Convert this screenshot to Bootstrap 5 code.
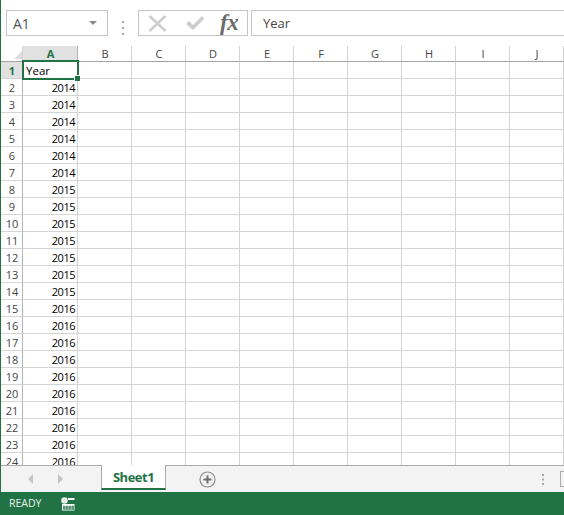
<!DOCTYPE html>
<html lang="en">
<head>
<meta charset="utf-8">
<title>Sheet1</title>
<link href="https://cdn.jsdelivr.net/npm/bootstrap@5.3.0/dist/css/bootstrap.min.css" rel="stylesheet">
<style>
html,body{height:100%;margin:0;background:#fff;overflow:hidden}
.xl-app{height:515px;width:564px;border-left:1px solid #217346;overflow:hidden}
.xl-toolbar{height:46px;flex:none;padding:10px 0 0 5px}
.xl-namebox{width:102px;height:26px;border:1px solid #c6c6c6;padding:0 6px;font:14px "Open Sans",sans-serif;color:#555}
.xl-caret{width:0;height:0;border-left:4px solid transparent;border-right:4px solid transparent;border-top:4px solid #8a8a8a;margin-right:4px}
.xl-dots{width:30px}
.xl-dots i{width:2px;height:2px;background:#a8a8a8;display:block}
.xl-fnbtns{width:110px;height:26px;border:1px solid #c6c6c6;padding:0 0 0 9px}
.xl-check{margin-left:18px}
.xl-fx{margin-left:15px;font:italic 700 23px/24px "Liberation Serif",serif;color:#6b6b6b;letter-spacing:-.5px}
.xl-formula{flex:1;height:26px;margin-left:3px;border:1px solid #c6c6c6;border-right:0;padding:0 11px;font:13px/24px "Open Sans",sans-serif;color:#444}
.xl-gridwrap{flex:1;min-height:0;overflow:hidden}
.xl-grid{border-collapse:separate;border-spacing:0;table-layout:fixed;width:563px}
.xl-grid td,.xl-grid th{height:17px;padding:2px 0 0;border-right:1px solid #d4d4d4;border-bottom:1px solid #d4d4d4;line-height:14px;overflow:visible;white-space:nowrap}
.xl-grid thead th{height:16px;padding:1px 0 0 1px;border-bottom:1px solid #a3a3a3;font:400 11px/14px "Open Sans",sans-serif;color:#444;text-align:center;background:#fff}
.xl-grid tbody th{padding-left:1px;font:400 11px/14px "Open Sans",sans-serif;color:#444;text-align:center;background:#fff;border-right:1px solid #b5b5b5}
.xl-grid td{font:11px/14px "Open Sans",sans-serif;letter-spacing:-.5px;color:#000;text-align:right;padding-right:2px}
.xl-grid .xl-hot{background:#e1e1e1;color:#217346;font-weight:700;border-right-color:#b5b5b5}
.xl-grid td.xl-txt{font-size:11.5px;letter-spacing:0;text-align:left;padding-left:3px;position:relative}
.xl-sel{position:absolute;left:-1px;top:-2px;width:57px;height:20px;border:2px solid #217346;pointer-events:none}
.xl-handle{position:absolute;right:-3px;bottom:-3px;background:#217346;border-left:1px solid #fff;border-top:1px solid #fff;box-sizing:content-box;width:5px;height:5px}
.xl-corner{width:0;height:0;border-left:8px solid transparent;border-bottom:8px solid #dcdcdc;position:absolute;left:13px;top:5px}
.xl-cornercell{position:relative}
.xl-tabs{height:27px;flex:none;background:#f3f3f3;border-top:1px solid #ababab;padding-left:26px}
.xl-arrows{width:74px;gap:21px}
.xl-tab{width:65px;height:25px;margin-top:-1px;background:#fff;border-left:1px solid #ababab;border-right:1px solid #ababab;border-bottom:2px solid #217346;font:700 13px/25px "Open Sans",sans-serif;color:#217346;text-align:center;letter-spacing:-.5px}
.xl-plus{margin-left:33px;margin-top:5px}
.xl-right{margin-left:auto;gap:15px}
.xl-scroll{width:4px;height:16px;border:1px solid #ababab;border-right:0;background:#f3f3f3}
.xl-status{height:23px;flex:none;background:#217346;color:#e8f1ec;font:10.5px/21px "Open Sans",sans-serif;padding-left:9px;margin-left:-1px}
.xl-ready{width:52px}
</style>
</head>
<body>
<div class="xl-app d-flex flex-column">
  <div class="xl-toolbar d-flex">
    <div class="xl-namebox d-flex align-items-center justify-content-between"><span>A1</span><span class="xl-caret"></span></div>
    <div class="xl-dots d-flex flex-column align-items-center justify-content-center gap-1"><i></i><i></i><i></i></div>
    <div class="xl-fnbtns d-flex align-items-center">
      <svg width="19" height="17" viewBox="0 0 19 17"><path d="M1.500 1l16 15M17.500 1l-16 15" stroke="#cdcdcd" stroke-width="2.600" fill="none"/></svg>
      <svg class="xl-check" width="20" height="16" viewBox="0 0 20 16"><path d="M1 9l3-3 4 4 9-9 2 3-11 11z" fill="#cdcdcd"/></svg>
      <span class="xl-fx">fx</span>
    </div>
    <div class="xl-formula">Year</div>
  </div>
  <div class="xl-gridwrap">
    <table class="xl-grid">
      <colgroup><col style="width:22px"><col style="width:55px"><col style="width:54px"><col style="width:54px"><col style="width:54px"><col style="width:54px"><col style="width:54px"><col style="width:54px"><col style="width:54px"><col style="width:54px"><col style="width:54px"></colgroup>
      <thead><tr><th class="xl-cornercell"><span class="xl-corner"></span></th><th class="xl-hot">A</th><th>B</th><th>C</th><th>D</th><th>E</th><th>F</th><th>G</th><th>H</th><th>I</th><th>J</th></tr></thead>
      <tbody>
<tr><th class="xl-hot">1</th><td class="xl-txt">Year<span class="xl-sel"><span class="xl-handle"></span></span></td><td></td><td></td><td></td><td></td><td></td><td></td><td></td><td></td><td></td></tr>
<tr><th>2</th><td>2014</td><td></td><td></td><td></td><td></td><td></td><td></td><td></td><td></td><td></td></tr>
<tr><th>3</th><td>2014</td><td></td><td></td><td></td><td></td><td></td><td></td><td></td><td></td><td></td></tr>
<tr><th>4</th><td>2014</td><td></td><td></td><td></td><td></td><td></td><td></td><td></td><td></td><td></td></tr>
<tr><th>5</th><td>2014</td><td></td><td></td><td></td><td></td><td></td><td></td><td></td><td></td><td></td></tr>
<tr><th>6</th><td>2014</td><td></td><td></td><td></td><td></td><td></td><td></td><td></td><td></td><td></td></tr>
<tr><th>7</th><td>2014</td><td></td><td></td><td></td><td></td><td></td><td></td><td></td><td></td><td></td></tr>
<tr><th>8</th><td>2015</td><td></td><td></td><td></td><td></td><td></td><td></td><td></td><td></td><td></td></tr>
<tr><th>9</th><td>2015</td><td></td><td></td><td></td><td></td><td></td><td></td><td></td><td></td><td></td></tr>
<tr><th>10</th><td>2015</td><td></td><td></td><td></td><td></td><td></td><td></td><td></td><td></td><td></td></tr>
<tr><th>11</th><td>2015</td><td></td><td></td><td></td><td></td><td></td><td></td><td></td><td></td><td></td></tr>
<tr><th>12</th><td>2015</td><td></td><td></td><td></td><td></td><td></td><td></td><td></td><td></td><td></td></tr>
<tr><th>13</th><td>2015</td><td></td><td></td><td></td><td></td><td></td><td></td><td></td><td></td><td></td></tr>
<tr><th>14</th><td>2015</td><td></td><td></td><td></td><td></td><td></td><td></td><td></td><td></td><td></td></tr>
<tr><th>15</th><td>2016</td><td></td><td></td><td></td><td></td><td></td><td></td><td></td><td></td><td></td></tr>
<tr><th>16</th><td>2016</td><td></td><td></td><td></td><td></td><td></td><td></td><td></td><td></td><td></td></tr>
<tr><th>17</th><td>2016</td><td></td><td></td><td></td><td></td><td></td><td></td><td></td><td></td><td></td></tr>
<tr><th>18</th><td>2016</td><td></td><td></td><td></td><td></td><td></td><td></td><td></td><td></td><td></td></tr>
<tr><th>19</th><td>2016</td><td></td><td></td><td></td><td></td><td></td><td></td><td></td><td></td><td></td></tr>
<tr><th>20</th><td>2016</td><td></td><td></td><td></td><td></td><td></td><td></td><td></td><td></td><td></td></tr>
<tr><th>21</th><td>2016</td><td></td><td></td><td></td><td></td><td></td><td></td><td></td><td></td><td></td></tr>
<tr><th>22</th><td>2016</td><td></td><td></td><td></td><td></td><td></td><td></td><td></td><td></td><td></td></tr>
<tr><th>23</th><td>2016</td><td></td><td></td><td></td><td></td><td></td><td></td><td></td><td></td><td></td></tr>
<tr><th>24</th><td>2016</td><td></td><td></td><td></td><td></td><td></td><td></td><td></td><td></td><td></td></tr>
      </tbody>
    </table>
  </div>
  <div class="xl-tabs d-flex">
    <div class="xl-arrows d-flex align-items-center">
      <svg width="8" height="10" viewBox="0 0 8 10"><path d="M6 0v10L1 5z" fill="#c4c4c4"/></svg>
      <svg width="8" height="10" viewBox="0 0 8 10"><path d="M2 0v10l5-5z" fill="#c4c4c4"/></svg>
    </div>
    <div class="xl-tab">Sheet1</div>
    <svg class="xl-plus" width="17" height="17" viewBox="0 0 17 17"><circle cx="8.500" cy="8.500" r="7.500" fill="none" stroke="#8c8c8c" stroke-width="1.200"/><path d="M4.500 8.500h8M8.500 4.500v8" stroke="#6e6e6e" stroke-width="2"/></svg>
    <div class="xl-right d-flex align-items-center">
      <svg width="3" height="11" viewBox="0 0 3 11"><path d="M0 0h2v2H0zM0 4.500h2v2H0zM0 9h2v2H0z" fill="#a8a8a8"/></svg>
      <div class="xl-scroll"></div>
    </div>
  </div>
  <div class="xl-status d-flex align-items-center">
    <span class="xl-ready">READY</span>
    <svg width="14" height="14" viewBox="0 0 14 14"><circle cx="3.500" cy="3.500" r="3.300" fill="#e6efea"/><path d="M7 1h6.500v2H7zM1 7h12.500v6.500H1z" fill="#fff"/><path d="M3 8.500v4M6 8.500v4M9 8.500v4M12 8.500v4M2 10h11M2 12h11" stroke="#217346" stroke-width="1" fill="none"/></svg>
  </div>
</div>
</body>
</html>
